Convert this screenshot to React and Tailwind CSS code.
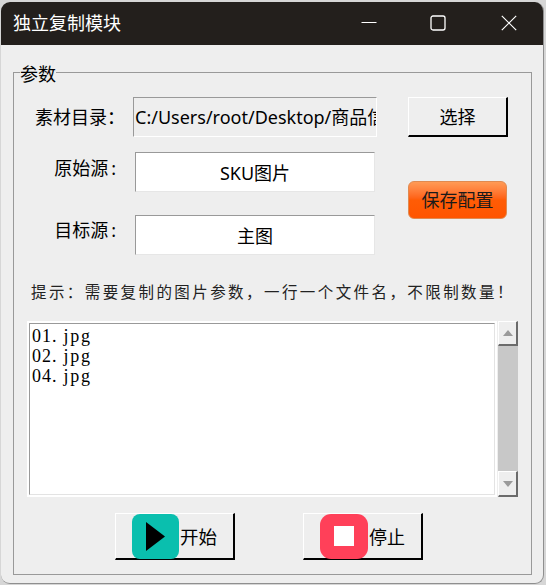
function Jpg({ n }) {
  return (
    <div className="whitespace-nowrap">
      <span className="tracking-[1px]">{n}.</span>
      <span className="ml-[6px] tracking-[1.8px]">jpg</span>
    </div>
  );
}

export default function App() {
  return (
    <div className="w-[546px] h-[585px] bg-[#d6d6d6] pt-[2px] pl-px overflow-hidden font-['Noto_Sans','Noto_Sans_CJK_SC',sans-serif] text-black">
      <div className="w-[543px] h-[582px] bg-[#eeeeee] rounded-[9px] border-r border-b border-[#8f8f8f] overflow-hidden">
        <div className="h-[43px] bg-[#231f1c] flex items-center text-white">
          <div className="ml-[12px] text-[18px] leading-[24px] -mt-[1px]">独立复制模块</div>
          <div className="ml-auto flex items-center -mt-[1px]">
            <svg width="16" height="16" viewBox="0 0 16 16" className="mr-[53px]"><path d="M0.5 7.5h15" stroke="#fff" strokeWidth="1.2" /></svg>
            <svg width="16" height="16" viewBox="0 0 16 16" className="mr-[55px]"><rect x="1" y="1" width="14" height="14" rx="2" fill="none" stroke="#fff" strokeWidth="1.3" /></svg>
            <svg width="16" height="16" viewBox="0 0 16 16" className="mr-[26px]"><path d="M0.8 0.8L15.2 15.2M15.2 0.8L0.8 15.2" stroke="#fff" strokeWidth="1.2" /></svg>
          </div>
        </div>
        <fieldset className="ml-[12px] mt-[15px] w-[519px] h-[515px] border border-[#999999]">
          <legend className="ml-[6px] text-[18px] leading-[28px] h-[24px] -mt-[1px]">参数</legend>
          <div className="flex mt-[13px]">
            <div className="w-[394px] shrink-0">
              <div className="flex h-[40px]">
                <div className="w-[119px] pl-[21px] text-[18px] leading-[40px] whitespace-nowrap">素材目录：</div>
                <div className="w-[244px] h-[40px] border-t border-l border-t-[#999999] border-l-[#999999] border-b border-r border-b-white border-r-white bg-[#eeeeee] pl-px overflow-hidden whitespace-nowrap text-[18px] leading-[38px]">C:/Users/root/Desktop/商品信息</div>
              </div>
              <div className="flex mt-[15px] h-[40px]">
                <div className="w-[121px] pr-[19px] text-right text-[18px] leading-[32px] whitespace-nowrap">原始源<span className="ml-[3px]">:</span></div>
                <div className="w-[240px] h-[40px] bg-white border-t border-l border-t-[#999999] border-l-[#999999] border-b border-r border-b-[#e6e6e6] border-r-[#e6e6e6] text-center text-[18px] leading-[40px]">SKU图片</div>
              </div>
              <div className="flex mt-[23px] h-[40px]">
                <div className="w-[121px] pr-[19px] text-right text-[18px] leading-[30px] whitespace-nowrap">目标源<span className="ml-[3px]">:</span></div>
                <div className="w-[240px] h-[40px] bg-white border-t border-l border-t-[#999999] border-l-[#999999] border-b border-r border-b-[#e6e6e6] border-r-[#e6e6e6] text-center text-[18px] leading-[40px]">主图</div>
              </div>
            </div>
            <div className="w-[100px]">
              <div className="h-[40px] w-[100px] bg-[#eeeeee] border-t border-l border-white border-b-2 border-r-2 border-b-black border-r-black text-center text-[18px] leading-[39px]">选择</div>
              <div className="mt-[44px] h-[38px] w-[99px] rounded-[6px] border border-[#e08a50] bg-gradient-to-b from-[#ff9a55] via-[#ff5c05] to-[#ff5500] text-center text-[18px] leading-[36px] text-[#1a1a1a]">保存配置</div>
            </div>
          </div>
          <div className="mt-[25px] ml-[17px] h-[24px] text-[15.5px] leading-[24px] tracking-[2.42px] whitespace-nowrap text-[#222222]">提示：需要复制的图片参数，一行一个文件名，不限制数量！</div>
          <div className="flex mt-[17px] ml-[13px] h-[176px]">
            <div className="w-[470px] border-2 border-white">
              <div className="h-full bg-white border-t border-l border-t-[#999999] border-l-[#999999] border-b border-r border-b-[#e3e3e3] border-r-[#e3e3e3] pl-[2px] font-['Liberation_Serif',serif] text-[18px] leading-[20px] pt-[2px]">
                <Jpg n="01" />
                <Jpg n="02" />
                <Jpg n="04" />
              </div>
            </div>
            <div className="ml-px w-[20px] flex flex-col bg-[#c8c8c8]">
              <div className="h-[25px] bg-[#eeeeee] border-t border-l border-white border-b-2 border-r-2 border-b-[#6b6b6b] border-r-[#6b6b6b] flex items-center justify-center">
                <svg width="10" height="6" viewBox="0 0 10 6"><path d="M5 0L10 6H0Z" fill="#9a9a9a" /></svg>
              </div>
              <div className="flex-1" />
              <div className="h-[26px] bg-[#eeeeee] border-t border-l border-white border-b-2 border-r-2 border-b-[#6b6b6b] border-r-[#6b6b6b] flex items-center justify-center">
                <svg width="10" height="6" viewBox="0 0 10 6"><path d="M5 6L10 0H0Z" fill="#9a9a9a" /></svg>
              </div>
            </div>
          </div>
          <div className="flex mt-[16px] ml-[101px]">
            <div className="w-[120px] h-[47px] bg-[#eeeeee] border-t border-l border-white border-b-2 border-r-2 border-b-black border-r-black flex items-center pl-[16px]">
              <div className="w-[47px] h-[45px] shrink-0 rounded-[8px] bg-[#0abfae] flex items-center justify-center">
                <svg width="19" height="29" viewBox="0 0 19 29"><path d="M0 0L19 14.5L0 29Z" fill="#000" /></svg>
              </div>
              <div className="ml-px text-[18.5px] leading-[24px] mt-[2px]">开始</div>
            </div>
            <div className="ml-[68px] w-[120px] h-[47px] bg-[#eeeeee] border-t border-l border-white border-b-2 border-r-2 border-b-black border-r-black flex items-center pl-[16px]">
              <div className="w-[48px] h-[45px] shrink-0 rounded-[11px] bg-[#ff4059] flex items-center justify-center">
                <div className="w-[20px] h-[20px] bg-white" />
              </div>
              <div className="ml-px text-[18px] leading-[24px] mt-[2px]">停止</div>
            </div>
          </div>
        </fieldset>
      </div>
    </div>
  );
}
